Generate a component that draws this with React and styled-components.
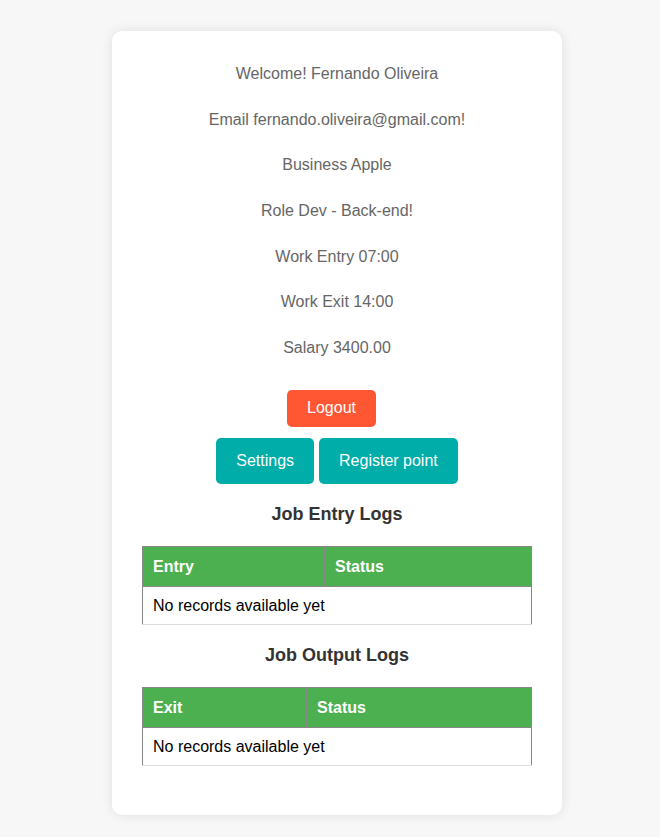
import styled, { createGlobalStyle } from "styled-components";

const GlobalStyle = createGlobalStyle`
  body {
    margin: 0;
    background: #f7f7f7;
    font-family: Arial, "Liberation Sans", sans-serif;
  }
`

const Page = styled.div`
  display: flex;
  justify-content: center;
  padding: 31px 0 22px 14px;
`

const Card = styled.div`
  width: 450px;
  box-sizing: border-box;
  background: #fff;
  border-radius: 10px;
  box-shadow: 0 0 12px rgba(0, 0, 0, 0.1);
  padding: 31px 30px 49px;
  display: flex;
  flex-direction: column;
  align-items: center;
`

const Info = styled.p`
  margin: 0 0 21.7px;
  line-height: 24px;
  font-size: 16px;
  color: #666;
  text-align: center;
`

const Button = styled.button`
  border: none;
  border-radius: 5px;
  color: #fff;
  font-family: inherit;
  font-size: 16px;
  line-height: 18px;
  cursor: pointer;
  box-sizing: border-box;
  background: ${p => (p.$danger ? "#ff5733" : "#00ada8")};
  height: ${p => (p.$danger ? "37px" : "46px")};
  margin-right: ${p => (p.$danger ? "11px" : "0")};
  padding: 0 20px;
`

const ButtonRow = styled.div`
  display: flex;
  gap: 5px;
  margin-top: ${p => p.$top || 0}px;
`

const Heading = styled.h3`
  margin: 20px 0 21px;
  font-size: 18px;
  line-height: 21px;
  color: #333;
`

const Table = styled.table`
  width: 100%;
  border-collapse: collapse;
  table-layout: fixed;
  font-size: 16px;
`

const Th = styled.th`
  background: #4caf50;
  color: #fff;
  text-align: left;
  padding: 10px;
  line-height: 19px;
  border: 1px solid #888;
  width: ${p => p.$w || "auto"};
`

const Td = styled.td`
  padding: 10px;
  color: #000;
  line-height: 17px;
  border-left: 1px solid #888;
  border-right: 1px solid #888;
  border-bottom: 1px solid #ddd;
`

const LogTable = ({ first, firstWidth }) => (
  <Table>
    <thead>
      <tr>
        <Th $w={firstWidth}>{first}</Th>
        <Th>Status</Th>
      </tr>
    </thead>
    <tbody>
      <tr>
        <Td colSpan={2}>No records available yet</Td>
      </tr>
    </tbody>
  </Table>
);

const App = () => {
  return (
    <>
      <GlobalStyle />
      <Page>
        <Card>
          <Info>Welcome! Fernando Oliveira</Info>
          <Info>Email fernando.oliveira@gmail.com!</Info>
          <Info>Business Apple</Info>
          <Info>Role Dev - Back-end!</Info>
          <Info>Work Entry 07:00</Info>
          <Info>Work Exit 14:00</Info>
          <Info>Salary 3400.00</Info>
          <ButtonRow $top={8}>
            <Button $danger>Logout</Button>
          </ButtonRow>
          <ButtonRow $top={11}>
            <Button>Settings</Button>
            <Button>Register point</Button>
          </ButtonRow>
          <Heading>Job Entry Logs</Heading>
          <LogTable first="Entry" firstWidth="161px" />
          <Heading>Job Output Logs</Heading>
          <LogTable first="Exit" firstWidth="143px" />
        </Card>
      </Page>
    </>
  );
};

export default App;
